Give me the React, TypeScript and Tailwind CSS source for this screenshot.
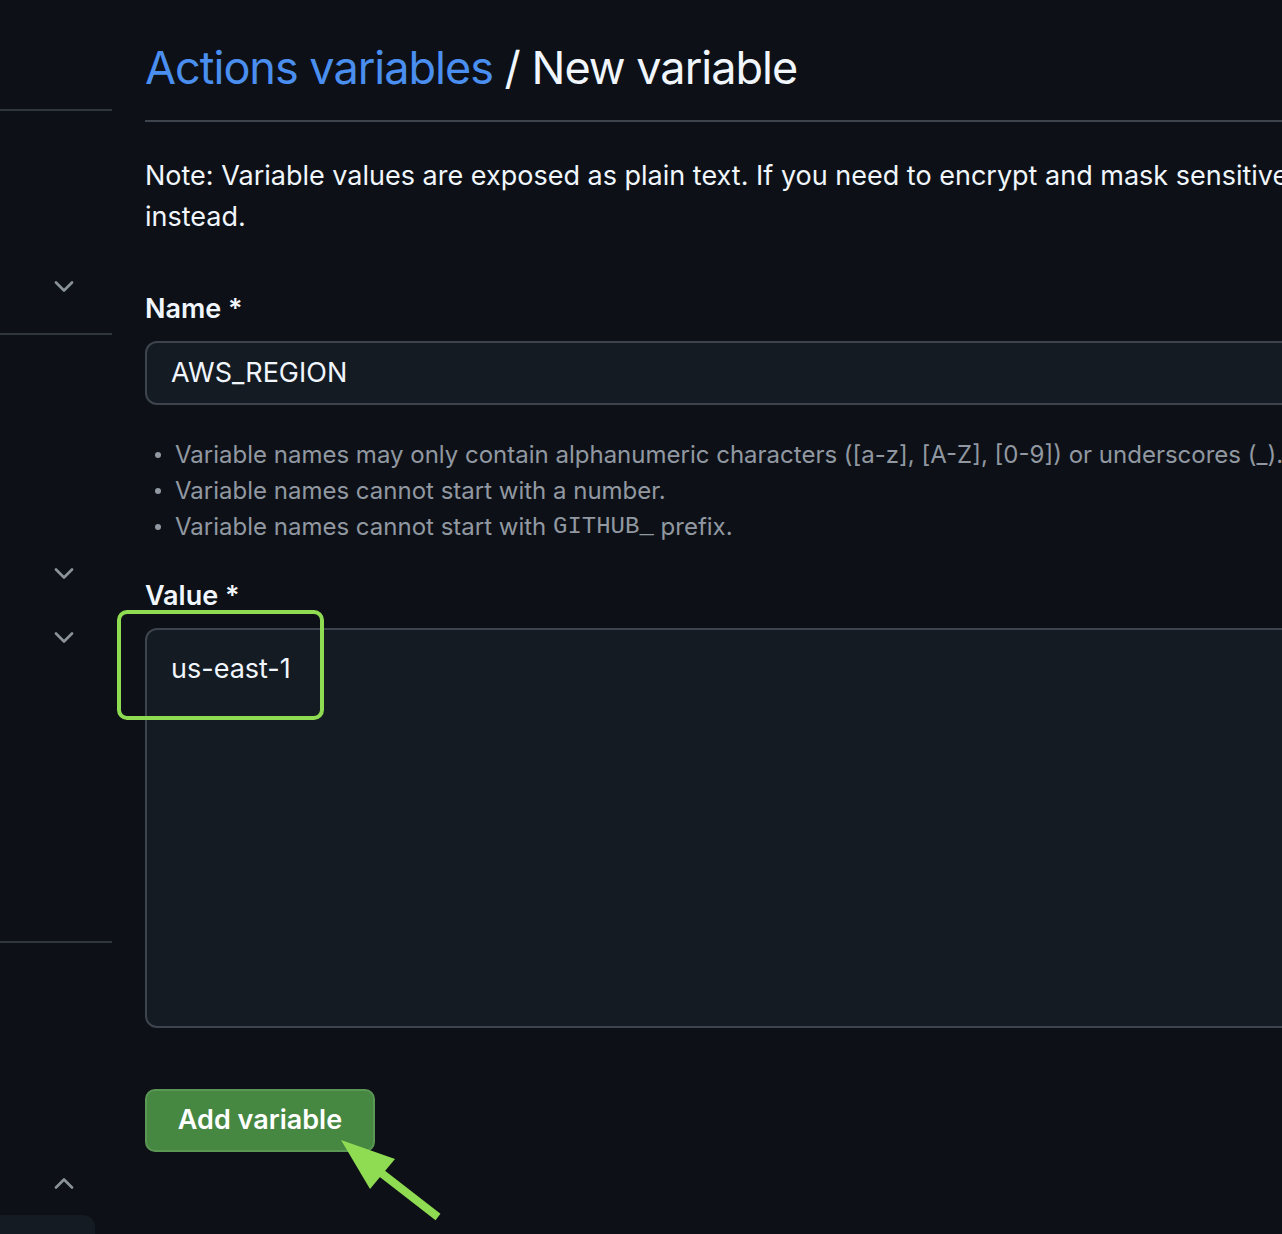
import React from "react";

const Chevron = ({ up = false }: { up?: boolean }) => (
  <svg width="20" height="12" viewBox="0 0 20 12" fill="none" className="block">
    <polyline
      points={up ? "2,10.5 10,2.5 18,10.5" : "2,1.5 10,9.5 18,1.5"}
      stroke="#8b929b"
      strokeWidth="2.6"
      strokeLinecap="round"
      strokeLinejoin="round"
    />
  </svg>
);

function Sidebar() {
  return (
    <div className="flex w-[112px] shrink-0 flex-col">
      <div className="h-[111px] border-b-2 border-[#30363d]" />
      <div className="flex h-[224px] items-start justify-end border-b-2 border-[#30363d] pr-[38px] pt-[170px]">
        <Chevron />
      </div>
      <div className="flex h-[608px] flex-col items-end border-b-2 border-[#30363d] pr-[38px] pt-[233px]">
        <Chevron />
        <div className="h-[52px]" />
        <Chevron />
      </div>
      <div className="flex flex-1 flex-col items-end pr-[38px] pt-[234px]">
        <Chevron up />
      </div>
    </div>
  );
}

function Hint({ children }: { children: React.ReactNode }) {
  return (
    <li className="flex items-center whitespace-nowrap">
      <span className="mr-[14px] ml-[10px] h-[6px] w-[6px] rounded-full bg-[#9198a1]" />
      {children}
    </li>
  );
}

export default function App() {
  return (
    <div className="relative flex h-[1234px] w-[1282px] overflow-hidden bg-[#0d1117] font-['Inter',sans-serif] text-[#f0f6fc]">
      <Sidebar />

      <main className="ml-[33px] w-[1300px] shrink-0">
        <h1 className="mt-[38px] border-b-2 border-[#3d444d] pb-[22px] text-[45px] leading-[60px] font-normal tracking-[-1px]">
          <span className="text-[#4a8ff0]">Actions variables</span>
          <span> / New variable</span>
        </h1>

        <p className="mt-[33px] whitespace-nowrap text-[27px] leading-[41px]">
          Note: Variable values are exposed as plain text. If you need to encrypt and mask sensitive information, create a secret
          <br />
          instead.
        </p>

        <label className="mt-[54px] block text-[27px] leading-[36px] font-semibold">Name *</label>
        <div className="mt-[14px] flex h-[64px] items-center rounded-[12px] border-2 border-[#3d444d] bg-[#151b23] pl-[24px] text-[27px]">
          AWS_REGION
        </div>

        <ul className="mt-[32px] text-[24px] leading-[36px] text-[#9198a1]">
          <Hint>Variable names may only contain alphanumeric characters ([a-z], [A-Z], [0-9]) or underscores (_).</Hint>
          <Hint>Variable names cannot start with a number.</Hint>
          <Hint>
            Variable names cannot start with&nbsp;
            <code className="font-['Liberation_Mono',monospace] text-[24px]">GITHUB_</code>
            &nbsp;prefix.
          </Hint>
        </ul>

        <label className="mt-[33px] block text-[27px] leading-[36px] font-semibold">Value *</label>
        <div className="mt-[14px] h-[400px] rounded-[12px] border-2 border-[#3d444d] bg-[#151b23] pl-[24px] pt-[21px] text-[27px] leading-[36px]">
          us-east-1
        </div>

        <button
          type="button"
          className="mt-[61px] flex h-[63px] w-[230px] items-center justify-center rounded-[10px] border-2 border-[#5a9654] bg-[#468741] text-[27px] font-semibold text-white"
        >
          Add variable
        </button>
      </main>

      <div className="absolute bottom-0 left-0 h-[19px] w-[95px] rounded-tr-[12px] bg-[#151b23]" />

      <div className="absolute left-[117px] top-[610px] h-[110px] w-[207px] rounded-[10px] border-[4px] border-[#8fdc52]" />

      <svg className="absolute left-[335px] top-[1135px]" width="110" height="90" viewBox="0 0 110 90">
        <line x1="45" y1="37" x2="103" y2="82" stroke="#8fdc52" strokeWidth="8" />
        <polygon points="6,5 60,24 35,54" fill="#8fdc52" />
      </svg>
    </div>
  );
}
